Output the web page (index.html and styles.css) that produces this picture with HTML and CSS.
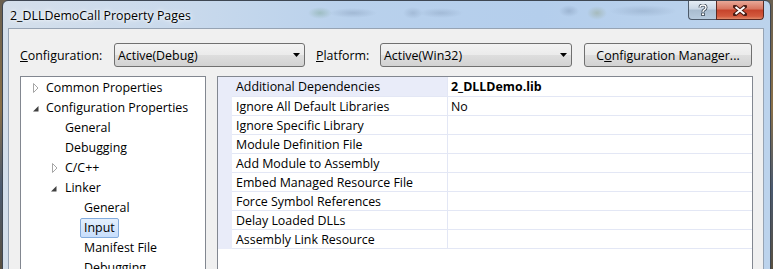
FILE: index.html
```html
<!DOCTYPE html>
<html lang="en">
<head>
  <meta charset="UTF-8">
  <title>2_DLLDemoCall Property Pages</title>
  <link rel="stylesheet" href="styles.css">
</head>
<body>
  <div class="window">
    <div class="titlebar">
      <span class="title">2_DLLDemoCall Property Pages</span>
      <div class="caption">
        <div class="cap-btn cap-help">
          <svg width="10" height="12" viewBox="0 0 10 12">
            <path d="M2 3.5 Q2 1 5 1 Q8 1 8 3.5 Q8 5 6 6 Q5 6.6 5 8" fill="none" stroke="#3a4654" stroke-width="3"/>
            <path d="M2 3.5 Q2 1 5 1 Q8 1 8 3.5 Q8 5 6 6 Q5 6.6 5 8" fill="none" stroke="#fff" stroke-width="1.4"/>
            <rect x="3.6" y="9" width="2.8" height="2.6" fill="#fff" stroke="#3a4654" stroke-width="0.8"/>
          </svg>
        </div>
        <div class="cap-btn cap-close">
          <svg width="14" height="11" viewBox="0 0 14 11">
            <path d="M2 1.5 L12 9.5 M12 1.5 L2 9.5" stroke="#4a1c14" stroke-width="4" stroke-linecap="square"/>
            <path d="M2.5 2 L11.5 9 M11.5 2 L2.5 9" stroke="#fff" stroke-width="2"/>
          </svg>
        </div>
      </div>
    </div>

    <div class="client">
      <div class="config-row">
        <label class="lbl lbl-config"><u>C</u>onfiguration:</label>
        <div class="combo combo-config">
          <span>Active(Debug)</span>
          <svg class="arrow" width="7" height="4" viewBox="0 0 7 4"><path d="M0 0 H7 L3.5 4 Z" fill="#000"/></svg>
        </div>
        <label class="lbl lbl-platform"><u>P</u>latform:</label>
        <div class="combo combo-platform">
          <span>Active(Win32)</span>
          <svg class="arrow" width="7" height="4" viewBox="0 0 7 4"><path d="M0 0 H7 L3.5 4 Z" fill="#000"/></svg>
        </div>
        <button class="btn-manager">C<u>o</u>nfiguration Manager...</button>
      </div>

      <div class="panes">
        <ul class="tree">
          <li class="lv0"><span class="exp"><svg width="8" height="10" viewBox="0 0 8 10"><path d="M1.5 0.5 L6 5 L1.5 9.5 Z" fill="#fff" stroke="#a6a6a6"/></svg></span><span class="tlabel">Common Properties</span></li>
          <li class="lv0"><span class="exp"><svg width="8" height="10" viewBox="0 0 8 10"><path d="M6.5 3 L6.5 8.5 L1 8.5 Z" fill="#404040"/></svg></span><span class="tlabel">Configuration Properties</span></li>
          <li class="lv1"><span class="exp"></span><span class="tlabel">General</span></li>
          <li class="lv1"><span class="exp"></span><span class="tlabel">Debugging</span></li>
          <li class="lv1"><span class="exp"><svg width="8" height="10" viewBox="0 0 8 10"><path d="M1.5 0.5 L6 5 L1.5 9.5 Z" fill="#fff" stroke="#a6a6a6"/></svg></span><span class="tlabel">C/C++</span></li>
          <li class="lv1"><span class="exp"><svg width="8" height="10" viewBox="0 0 8 10"><path d="M5.5 3 L5.5 8.5 L0 8.5 Z" fill="#404040"/></svg></span><span class="tlabel">Linker</span></li>
          <li class="lv2"><span class="exp"></span><span class="tlabel">General</span></li>
          <li class="lv2"><span class="exp"></span><span class="tlabel sel">Input</span></li>
          <li class="lv2"><span class="exp"></span><span class="tlabel">Manifest File</span></li>
          <li class="lv2"><span class="exp"></span><span class="tlabel">Debugging</span></li>
        </ul>

        <div class="grid">
          <div class="prow active"><span class="gut"></span><span class="pname">Additional Dependencies</span><span class="pval bold">2_DLLDemo.lib</span></div>
          <div class="prow"><span class="gut"></span><span class="pname">Ignore All Default Libraries</span><span class="pval">No</span></div>
          <div class="prow"><span class="gut"></span><span class="pname">Ignore Specific Library</span><span class="pval"></span></div>
          <div class="prow"><span class="gut"></span><span class="pname">Module Definition File</span><span class="pval"></span></div>
          <div class="prow"><span class="gut"></span><span class="pname">Add Module to Assembly</span><span class="pval"></span></div>
          <div class="prow"><span class="gut"></span><span class="pname">Embed Managed Resource File</span><span class="pval"></span></div>
          <div class="prow"><span class="gut"></span><span class="pname">Force Symbol References</span><span class="pval"></span></div>
          <div class="prow"><span class="gut"></span><span class="pname">Delay Loaded DLLs</span><span class="pval"></span></div>
          <div class="prow"><span class="gut"></span><span class="pname">Assembly Link Resource</span><span class="pval"></span></div>
        </div>
      </div>
    </div>
  </div>
</body>
</html>
```

FILE: styles.css
```css
html, body {
  margin: 0;
  height: 269px;
  overflow: hidden;
}
body {
  background: linear-gradient(#6a6050, #8a7048 40%, #4a5a70 70%, #5a5040);
  font-family: "Open Sans", sans-serif;
  font-size: 12.4px;
  color: #000;
}
.window {
  margin-left: 2px;
  width: 767px;
  height: 320px;
  border: 1px solid #3e4753;
  border-radius: 6px 6px 0 0;
  background:
    radial-gradient(ellipse 12px 6px at 317px 12px, rgba(90, 140, 100, 0.3), transparent),
    radial-gradient(ellipse 24px 5px at 350px 12px, rgba(70, 90, 120, 0.2), transparent),
    radial-gradient(ellipse 10px 6px at 410px 12px, rgba(70, 90, 120, 0.18), transparent),
    radial-gradient(ellipse 22px 5px at 438px 12px, rgba(70, 90, 120, 0.18), transparent),
    radial-gradient(ellipse 10px 6px at 566px 10px, rgba(70, 90, 120, 0.22), transparent),
    radial-gradient(ellipse 10px 7px at 594px 12px, rgba(130, 140, 80, 0.3), transparent),
    radial-gradient(ellipse 34px 6px at 640px 10px, rgba(70, 90, 120, 0.18), transparent),
    linear-gradient(to right, #d4dfeb 0%, #c8d9ec 25%, #b9d1ec 45%, #b4ceec 70%, #bcd3ec 100%);
}
.titlebar {
  display: flex;
  height: 27px;
  padding: 0 6px 0 7px;
}
.title {
  line-height: 30px;
  text-shadow: 0 0 6px #fff, 0 0 3px #fff;
}
.caption {
  display: flex;
  margin-left: auto;
  height: 18px;
}
.cap-btn {
  display: flex;
  align-items: center;
  justify-content: center;
  box-sizing: border-box;
  height: 19px;
  border: 1px solid #4d5a6a;
  border-top: none;
}
.cap-help {
  width: 28px;
  border-radius: 0 0 0 4px;
  border-right: none;
  background: linear-gradient(#e6edf5, #c9d6e4 45%, #a9bccf 50%, #b7cadd);
}
.cap-close {
  width: 48px;
  border-radius: 0 0 4px 0;
  border-color: #5a2a22;
  background: linear-gradient(#e9a898, #d8745e 45%, #c6432b 50%, #d35a3e 85%, #e08a6a);
}
.client {
  margin: 0 6px 0 5px;
  height: 300px;
  border: 1px solid #96a3b3;
  background: #f0f0f0;
}
.config-row {
  display: flex;
  align-items: center;
  height: 24px;
  padding: 14px 0 0 11px;
}
.lbl-config {
  width: 94px;
}
.lbl-platform {
  width: 64px;
  margin-left: 11px;
}
.combo {
  display: flex;
  align-items: center;
  justify-content: space-between;
  box-sizing: border-box;
  height: 24px;
  padding: 0 4px 0 3px;
  border: 1px solid #707070;
  border-radius: 3px;
  background: linear-gradient(#f3f3f3, #ebebeb 50%, #dedede 50%, #d2d2d2);
}
.combo-config {
  width: 191px;
}
.combo-platform {
  width: 192px;
}
.btn-manager {
  box-sizing: border-box;
  width: 168px;
  height: 24px;
  margin-left: 12px;
  padding: 0;
  font-family: inherit;
  font-size: inherit;
  color: #000;
  border: 1px solid #707070;
  border-radius: 3px;
  background: linear-gradient(#f3f3f3, #ebebeb 50%, #dedede 50%, #d2d2d2);
}
.panes {
  display: flex;
  margin-top: 9px;
  padding-left: 11px;
}
.tree {
  box-sizing: border-box;
  width: 186px;
  height: 220px;
  margin: 0;
  padding: 1px 0 0;
  list-style: none;
  border: 1px solid #828790;
  background: #fff;
}
.tree li {
  display: flex;
  align-items: center;
  height: 20px;
}
.tree .lv1 { padding-left: 19px; }
.tree .lv2 { padding-left: 38px; }
.exp {
  display: flex;
  width: 21px;
}
.exp svg {
  margin-left: 11px;
}
.tlabel {
  padding: 0 3px;
  line-height: 18px;
  border: 1px solid transparent;
  border-radius: 2px;
  white-space: nowrap;
}
.tlabel.sel {
  border-color: #84acdd;
  background: linear-gradient(#e4effd, #c8defc);
}
.grid {
  box-sizing: border-box;
  width: 536px;
  height: 220px;
  margin-left: 11px;
  border: 1px solid #828790;
  background: #fff;
}
.prow {
  display: flex;
  height: 19px;
  line-height: 19px;
}
.prow:first-child {
  height: 20px;
  line-height: 20px;
}
.gut {
  width: 14px;
  background: #e9ecf9;
}
.pname {
  box-sizing: border-box;
  width: 216px;
  padding-left: 4px;
  border-right: 1px solid #e3e7f5;
  border-bottom: 1px solid #e3e7f5;
  white-space: nowrap;
}
.prow.active .pname {
  background: #e9ecf9;
}
.pval {
  flex: 1;
  padding-left: 3px;
  border-bottom: 1px solid #e3e7f5;
}
.bold {
  font-weight: bold;
}
```
